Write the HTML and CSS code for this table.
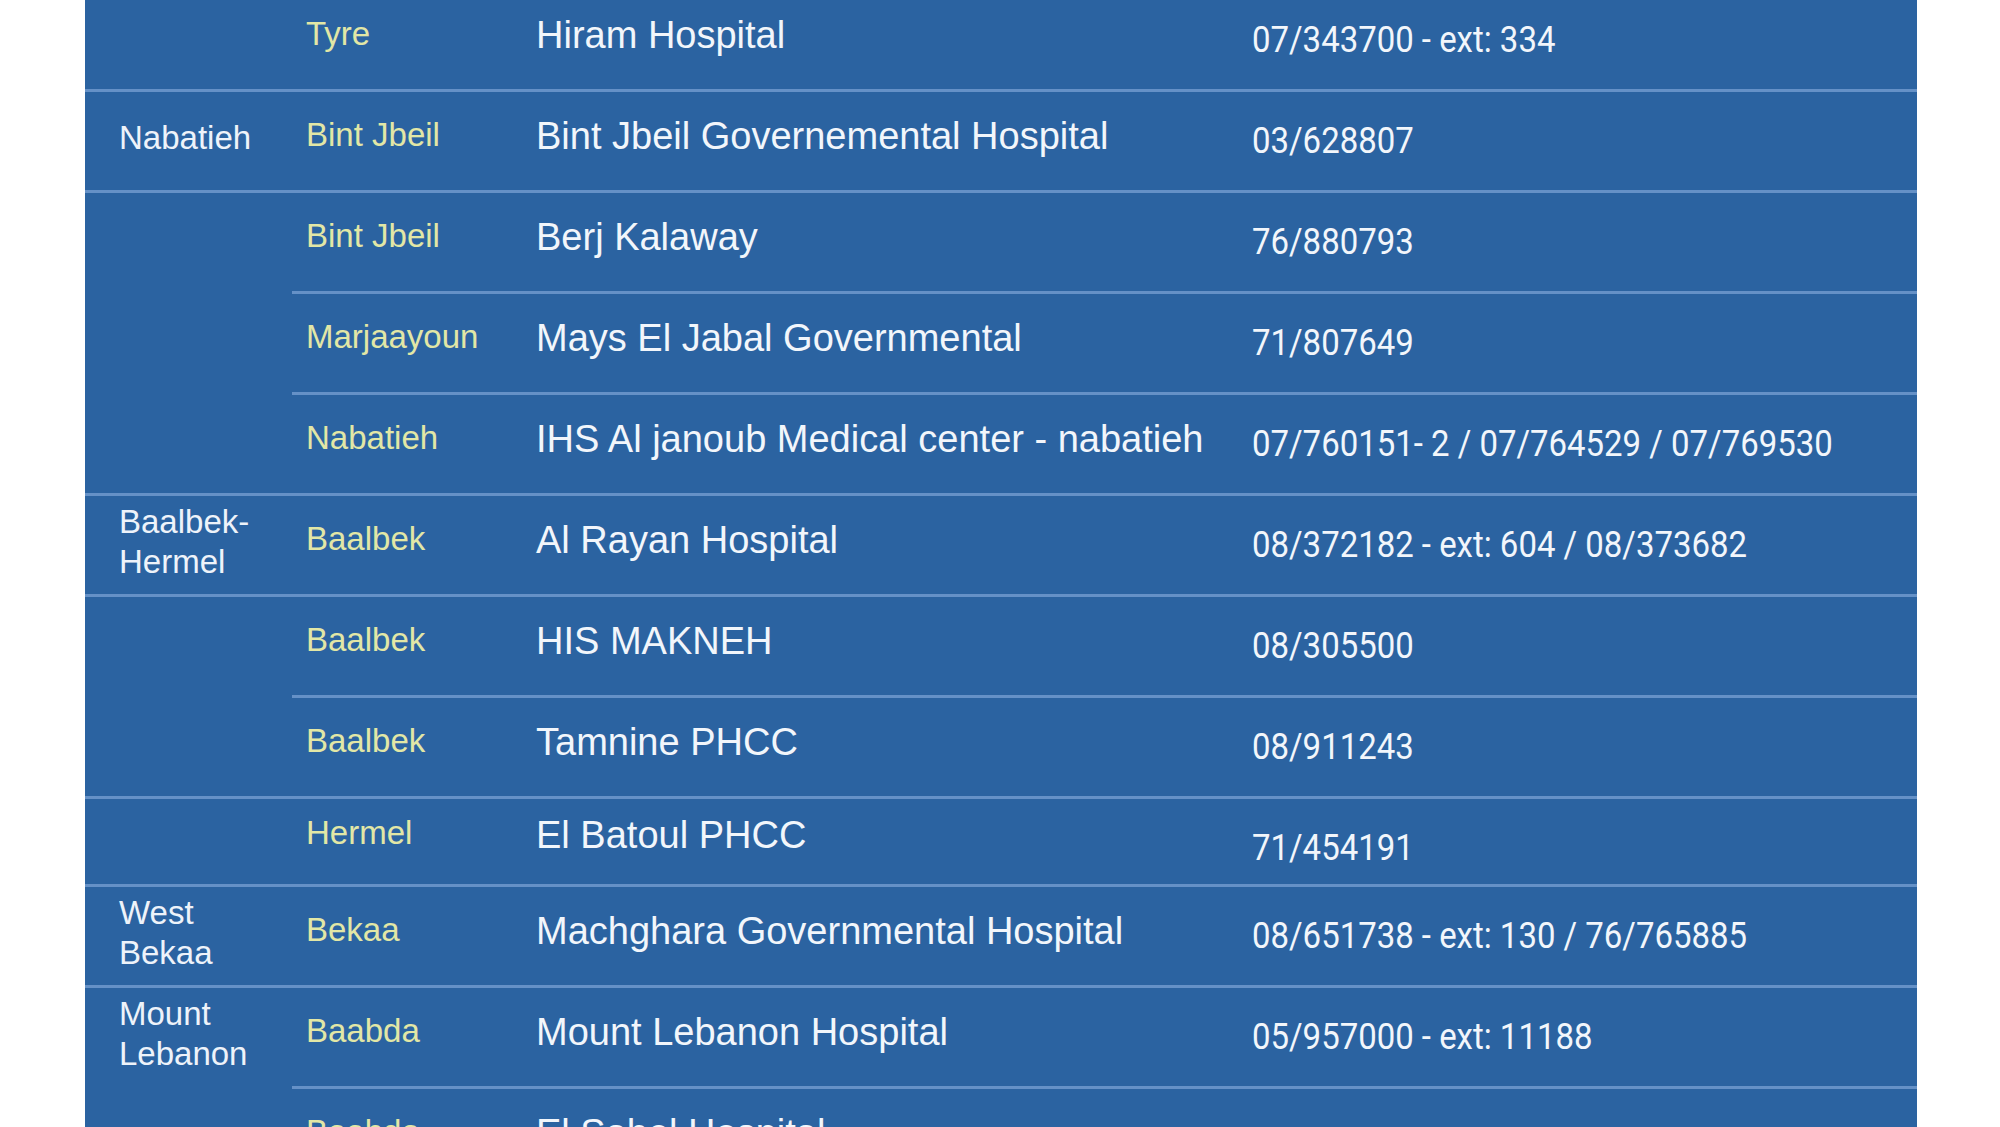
FILE: index.html
```html
<!DOCTYPE html>
<html lang="en">
<head>
<meta charset="utf-8">
<title>Hospitals by region</title>
<link rel="stylesheet" href="styles.css">
</head>
<body>
<div class="sheet">
  <div class="row">
    <div class="cell region region--cont"></div>
    <div class="cell district">Tyre</div>
    <div class="cell hospital">Hiram Hospital</div>
    <div class="cell phone"><span>07/343700 - ext: 334</span></div>
  </div>
  <div class="row">
    <div class="cell region">Nabatieh</div>
    <div class="cell district">Bint Jbeil</div>
    <div class="cell hospital">Bint Jbeil Governemental Hospital</div>
    <div class="cell phone"><span>03/628807</span></div>
  </div>
  <div class="row">
    <div class="cell region"></div>
    <div class="cell district">Bint Jbeil</div>
    <div class="cell hospital">Berj Kalaway</div>
    <div class="cell phone"><span>76/880793</span></div>
  </div>
  <div class="row">
    <div class="cell region region--cont"></div>
    <div class="cell district">Marjaayoun</div>
    <div class="cell hospital">Mays El Jabal Governmental</div>
    <div class="cell phone"><span>71/807649</span></div>
  </div>
  <div class="row">
    <div class="cell region region--cont"></div>
    <div class="cell district">Nabatieh</div>
    <div class="cell hospital">IHS Al janoub Medical center - nabatieh</div>
    <div class="cell phone"><span>07/760151- 2 / 07/764529 / 07/769530</span></div>
  </div>
  <div class="row">
    <div class="cell region">Baalbek-Hermel</div>
    <div class="cell district">Baalbek</div>
    <div class="cell hospital">Al Rayan Hospital</div>
    <div class="cell phone"><span>08/372182 - ext: 604 / 08/373682</span></div>
  </div>
  <div class="row">
    <div class="cell region"></div>
    <div class="cell district">Baalbek</div>
    <div class="cell hospital">HIS MAKNEH</div>
    <div class="cell phone"><span>08/305500</span></div>
  </div>
  <div class="row">
    <div class="cell region region--cont"></div>
    <div class="cell district">Baalbek</div>
    <div class="cell hospital">Tamnine PHCC</div>
    <div class="cell phone"><span>08/911243</span></div>
  </div>
  <div class="row row--short">
    <div class="cell region"></div>
    <div class="cell district">Hermel</div>
    <div class="cell hospital">El Batoul PHCC</div>
    <div class="cell phone"><span>71/454191</span></div>
  </div>
  <div class="row">
    <div class="cell region">West Bekaa</div>
    <div class="cell district">Bekaa</div>
    <div class="cell hospital">Machghara Governmental Hospital</div>
    <div class="cell phone"><span>08/651738 - ext: 130 / 76/765885</span></div>
  </div>
  <div class="row">
    <div class="cell region">Mount Lebanon</div>
    <div class="cell district">Baabda</div>
    <div class="cell hospital">Mount Lebanon Hospital</div>
    <div class="cell phone"><span>05/957000 - ext: 11188</span></div>
  </div>
  <div class="row">
    <div class="cell region region--cont"></div>
    <div class="cell district">Baabda</div>
    <div class="cell hospital">El Sahel Hospital</div>
    <div class="cell phone"></div>
  </div>
</div>
</body>
</html>
```

FILE: styles.css
```css
html, body {
  margin: 0;
  padding: 0;
  background: #ffffff;
}

body {
  font-family: "Liberation Sans", Arial, sans-serif;
  overflow: hidden;
}

.sheet {
  margin: -12px 0 0 85px;
  width: 1832px;
  background: #2b63a1;
}

.row {
  display: grid;
  grid-template-columns: 207px 230px 716px 679px;
  height: 101px;
}

.row--short {
  height: 88px;
}

.cell {
  border-top: 3px solid #6591c7;
}

.region {
  display: flex;
  align-items: center;
  padding: 0 20px 6px 34px;
  font-size: 33px;
  line-height: 40px;
  color: #eef3fa;
}

.region--cont {
  border-top-color: transparent;
}

.district {
  padding: 24px 0 0 14px;
  font-size: 33px;
  line-height: 38px;
  color: #e2e7a6;
}

.hospital {
  padding: 23px 0 0 14px;
  font-size: 38px;
  line-height: 42px;
  color: #f2f6fb;
}

.row--short .district,
.row--short .hospital {
  padding-top: 15px;
}

.phone {
  padding: 28px 0 0 14px;
  font-family: Roboto, "Liberation Sans", sans-serif;
  font-size: 36px;
  line-height: 42px;
  color: #f2f6fb;
  white-space: nowrap;
}

.phone span {
  display: inline-block;
  transform: scaleX(0.915);
  transform-origin: 0 50%;
}
```
